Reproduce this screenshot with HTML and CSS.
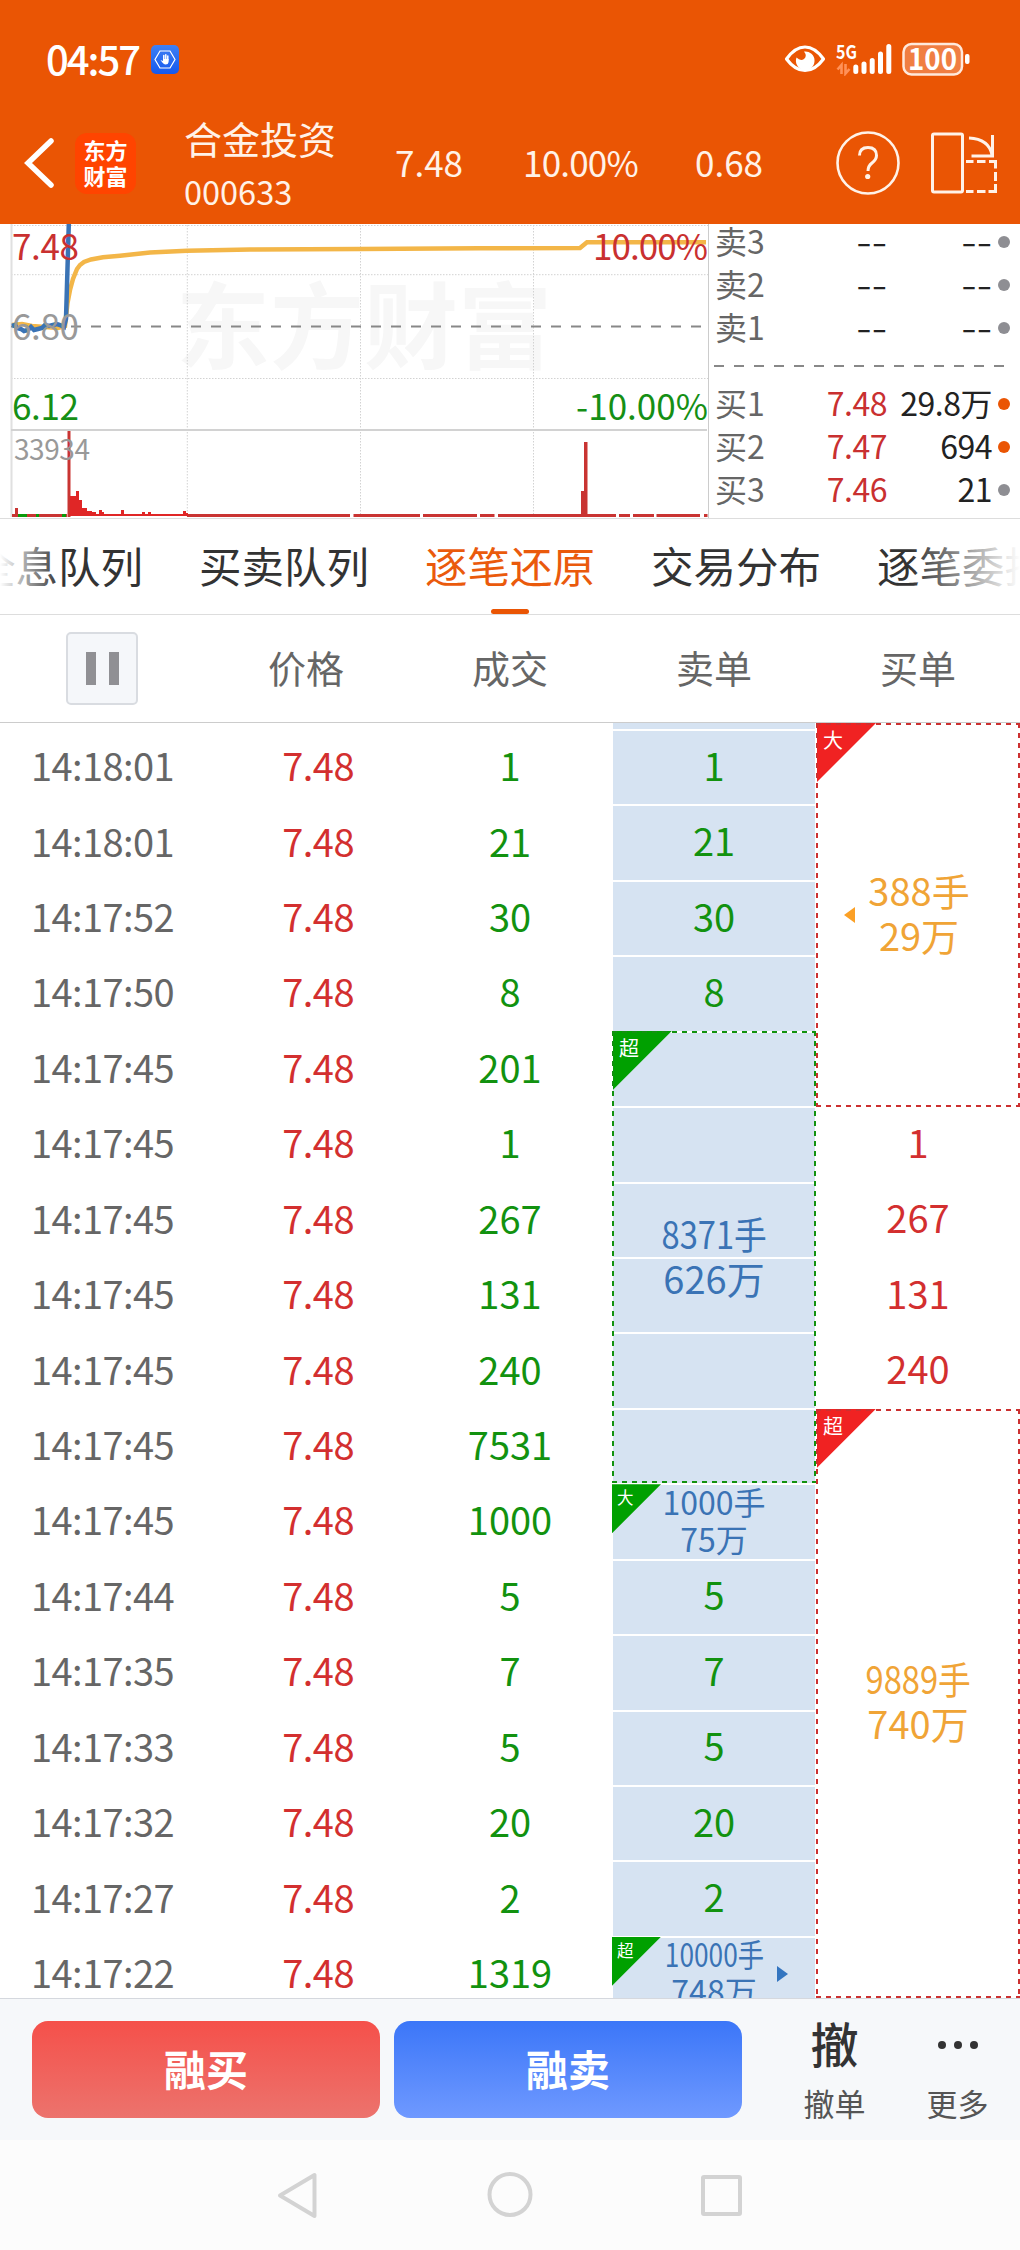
FILE: index.html
```html
<!DOCTYPE html>
<html lang="zh-CN">
<head>
    <meta charset="UTF-8">
    <meta name="viewport" content="width=device-width, initial-scale=1.0">
    <title>合金投资 000633</title>
    <link rel="stylesheet" href="styles.css">
</head>
<body>
    <header class="top">
        <div class="status">
            <span class="clock">04:57</span>
            <svg class="guard" width="28" height="29" viewBox="0 0 28 29">
                <defs>
                    <linearGradient id="guardBg" x1="0" y1="0" x2="0" y2="1">
                        <stop offset="0" stop-color="#4080f4"/>
                        <stop offset="1" stop-color="#1458ee"/>
                    </linearGradient>
                </defs>
                <rect width="28" height="29" rx="5" fill="url(#guardBg)"/>
                <path d="M9 6h10l5 8.500-5 8.500h-10l-5-8.500z" fill="none" stroke="#fff" stroke-width="1.200"/>
                <path d="M12.800 15V10.500M14.800 15V9.800M16.800 15V11" stroke="#fff" stroke-width="1.500" stroke-linecap="round"/>
                <path d="M9.500 15l2.500 1v-2h5.600v3q-.3 2.500-3 2.500-2 0-5.100-4.500z" fill="#fff"/>
            </svg>
            <svg class="signals" width="186" height="34" viewBox="784 42 186 34">
                <path d="M786.500 59Q795 47 805 47T823.500 59Q815 70.500 805 70.500T786.500 59z" fill="none" stroke="#fff" stroke-width="3.200" stroke-linejoin="round"/>
                <path d="M804 51.500a9.300 9.300 0 1 1-7.500 6q4 4 7.500 1.500 3.500-3 0-7.500z" fill="#fff"/>
                <text class="net" x="836" y="59" textLength="21" lengthAdjust="spacingAndGlyphs">5G</text>
                <path d="M841.500 74V65l-4 4.500M845.500 64v9.500l4-4.500" fill="none" stroke="#ff9159" stroke-width="2.600"/>
                <path d="M855.800 67v4.500M864 64v7.500M872.200 60.500v11M880.500 54v17.500M888.800 46.500v25" stroke="#fff" stroke-width="5" stroke-linecap="round"/>
                <rect x="903.500" y="44" width="58.500" height="30.500" rx="8" fill="#f07e42" stroke="#ffe9dc" stroke-width="2.500"/>
                <rect x="965" y="54" width="4.500" height="10" rx="2" fill="#fff"/>
                <text class="charge" x="908" y="69.500" textLength="49" lengthAdjust="spacingAndGlyphs">100</text>
            </svg>
        </div>
        <div class="stock">
            <svg class="back" width="34" height="52" viewBox="0 0 34 52">
                <path d="M31 4L8 26l23 22" fill="none" stroke="#fff" stroke-width="5.500" stroke-linecap="round"/>
            </svg>
            <div class="logo"><span>东方</span><span>财富</span></div>
            <div class="name">
                <div class="title">合金投资</div>
                <div class="code">000633</div>
            </div>
            <span class="figure last">7.48</span>
            <span class="figure percent">10.00%</span>
            <span class="figure change">0.68</span>
            <svg class="tools" width="164" height="66" viewBox="834 130 164 66">
                <g fill="none" stroke="#fff2e8" stroke-width="2.600">
                    <circle cx="868" cy="163" r="30.500"/>
                    <path d="M859.500 155.500q0-8 8.500-8t8.500 8q0 4-4.500 7.500-4 3-4 8" stroke-width="3"/>
                    <rect x="932.500" y="134" width="30" height="58" rx="1.500" stroke-width="3"/>
                    <path d="M969 138q20 1 23 17M992.500 135v21h-21" stroke-width="3"/>
                    <path d="M966 161.500h7.500M977 161.500h8.500M989 161.500h6.500v7M995.500 172v9M995.500 184v7.500h-7M985.500 191.500H977M973.500 191.500H966" stroke-width="3"/>
                </g>
                <circle cx="867.700" cy="176.500" r="2.600" fill="#fff2e8"/>
            </svg>
        </div>
    </header>

    <section class="market">
        <svg class="chart" width="708" height="293" viewBox="0 224 708 293">
            <text class="watermark" x="176" y="362" textLength="376">东方财富</text>
            <g fill="none" stroke="#d2d2d2">
                <path d="M11 225.500H708M11 274.700H708M11 378.500H708M187.300 225V517M360.500 225V517M533.500 225V517" stroke-dasharray="1.500 1.500"/>
                <path d="M11.500 224V517" stroke="#e0e0e0" stroke-width="2"/>
                <path d="M11 430H707" stroke-width="2"/>
            </g>
            <path d="M11 326.500H705" stroke="#888" stroke-width="2" stroke-dasharray="10 10"/>
            <path d="M12 325L22 324 32 326 45 327 58 328 65 326 67.500 303 70 290 73 279 77 269 80 265 84 262 91 259.500 103 257.300 120 255.800 150 252.500 187 250.700 250 249.600 360 248.900 480 248.200 580 248 587 242.200H706" fill="none" stroke="#f3b648" stroke-width="4.500"/>
            <path d="M12 326l3-1 2 3 4 1 3 2 4-1 3-3 3 3 4-1 4-1 3-3 4 1 4-1 4-1 3 1 4 2 2-8L68.800 224" fill="none" stroke="#3a73b5" stroke-width="4.500"/>
            <!-- 成交量 -->
            <g fill="#c93432">
                <rect x="12" y="514" width="55" height="3"/>
                <rect x="15" y="508" width="3" height="9"/>
                <rect x="67.500" y="431" width="3" height="86"/>
                <path d="M187 514h163v3H187zM353.500 514H420v3H353.500zM423 514h54v3H423zM480 514h14.500v3H480zM498 514H616v3H498zM619 514h11v3H619zM633 514h21v3H633zM656.500 514H700v3H656.500zM704 514h3.500v3H704z"/>
                <rect x="581" y="491" width="3.500" height="26"/>
                <rect x="584" y="442" width="3.500" height="75"/>
            </g>
            <path d="M70 496h6v-5h3v9h3v8h5v3h5v1h4v2h3v-4h3v2h2v2h17v-4h3v4h18v-2h3v2h3v-2h3v2h32v-3h3v2h2v3H70z" fill="#e02626"/>
            <path d="M18 514h9v3h-9zM36 514h3v3h-3zM62 514h4v3h-4z" fill="#0a9a0a"/>
            <g class="axis">
                <text x="12" y="260" textLength="67" fill="#c93030">7.48</text>
                <text x="12" y="340" textLength="67" fill="#999">6.80</text>
                <text x="12" y="420" textLength="67" fill="#158f15">6.12</text>
                <text x="593" y="260" textLength="115" fill="#c93030">10.00%</text>
                <text x="576" y="420" textLength="132" fill="#158f15">-10.00%</text>
            </g>
            <text class="volume" x="14" y="460" textLength="76">33934</text>
        </svg>
        <div class="quotes">
            <div class="quote"><span>卖3</span><b class="none">--</b><b class="none">--</b><i></i></div>
            <div class="quote"><span>卖2</span><b class="none">--</b><b class="none">--</b><i></i></div>
            <div class="quote"><span>卖1</span><b class="none">--</b><b class="none">--</b><i></i></div>
            <div class="divider"></div>
            <div class="quote"><span>买1</span><b class="up">7.48</b><b>29.8万</b><i class="hot"></i></div>
            <div class="quote"><span>买2</span><b class="up">7.47</b><b>694</b><i class="hot"></i></div>
            <div class="quote"><span>买3</span><b class="up">7.46</b><b>21</b><i></i></div>
        </div>
    </section>

    <nav class="tabs">
        <span>全息队列</span>
        <span>买卖队列</span>
        <span class="active">逐笔还原</span>
        <span>交易分布</span>
        <span>逐笔委托</span>
    </nav>

    <div class="columns">
        <div><button class="pause"><i></i><i></i></button></div>
        <div>价格</div>
        <div>成交</div>
        <div>卖单</div>
        <div>买单</div>
    </div>

    <main class="ticks">
        <div class="deals">
            <div class="deal"><span>14:18:01</span><span>7.48</span><span>1</span></div>
            <div class="deal"><span>14:18:01</span><span>7.48</span><span>21</span></div>
            <div class="deal"><span>14:17:52</span><span>7.48</span><span>30</span></div>
            <div class="deal"><span>14:17:50</span><span>7.48</span><span>8</span></div>
            <div class="deal"><span>14:17:45</span><span>7.48</span><span>201</span></div>
            <div class="deal"><span>14:17:45</span><span>7.48</span><span>1</span></div>
            <div class="deal"><span>14:17:45</span><span>7.48</span><span>267</span></div>
            <div class="deal"><span>14:17:45</span><span>7.48</span><span>131</span></div>
            <div class="deal"><span>14:17:45</span><span>7.48</span><span>240</span></div>
            <div class="deal"><span>14:17:45</span><span>7.48</span><span>7531</span></div>
            <div class="deal"><span>14:17:45</span><span>7.48</span><span>1000</span></div>
            <div class="deal"><span>14:17:44</span><span>7.48</span><span>5</span></div>
            <div class="deal"><span>14:17:35</span><span>7.48</span><span>7</span></div>
            <div class="deal"><span>14:17:33</span><span>7.48</span><span>5</span></div>
            <div class="deal"><span>14:17:32</span><span>7.48</span><span>20</span></div>
            <div class="deal"><span>14:17:27</span><span>7.48</span><span>2</span></div>
            <div class="deal"><span>14:17:22</span><span>7.48</span><span>1319</span></div>
        </div>
        <div class="orders sell">
            <div class="cell">1</div>
            <div class="cell">21</div>
            <div class="cell">30</div>
            <div class="cell">8</div>
            <div class="cell block frame rows-6">
                <em class="badge">超</em>
                <span class="narrow">8371手</span>
                <span>626万</span>
            </div>
            <div class="cell block small">
                <em class="badge">大</em>
                <span>1000手</span>
                <span>75万</span>
            </div>
            <div class="cell">5</div>
            <div class="cell">7</div>
            <div class="cell">5</div>
            <div class="cell">20</div>
            <div class="cell">2</div>
            <div class="cell block small">
                <em class="badge">超</em>
                <span class="narrow">10000手</span>
                <span>748万</span>
                <i class="arrow"></i>
            </div>
        </div>
        <div class="orders buy">
            <div class="cell block frame first">
                <em class="badge">大</em>
                <span>388手</span>
                <span>29万</span>
                <i class="arrow"></i>
            </div>
            <div class="cell">1</div>
            <div class="cell">267</div>
            <div class="cell">131</div>
            <div class="cell">240</div>
            <div class="cell block frame rest">
                <em class="badge">超</em>
                <span class="narrow">9889手</span>
                <span>740万</span>
            </div>
        </div>
    </main>

    <footer class="actions">
        <button class="trade red">融买</button>
        <button class="trade blue">融卖</button>
        <div class="action">
            <span class="glyph">撤</span>
            <span>撤单</span>
        </div>
        <div class="action">
            <span class="glyph dots"><i></i><i></i><i></i></span>
            <span>更多</span>
        </div>
    </footer>

    <div class="navbar">
        <svg width="1020" height="110" viewBox="0 0 1020 110">
            <g fill="none" stroke="#d3d3d3" stroke-width="4" stroke-linejoin="round">
                <path d="M314.500 35v41L280 55.500z"/>
                <circle cx="510" cy="54.500" r="20.500"/>
                <rect x="703" y="37" width="37" height="37" rx="1"/>
            </g>
        </svg>
    </div>
</body>
</html>
```
FILE: styles.css
```css
* {
    box-sizing: border-box;
}
body {
    margin: 0;
    width: 1020px;
    height: 2250px;
    overflow: hidden;
    background: #fff;
    color: #333;
    font-family: "Noto Sans CJK SC", sans-serif;
    font-size: 38px;
    line-height: 1;
}
button {
    border: none;
    padding: 0;
    font-family: inherit;
}
i, em {
    font-style: normal;
}

/* Header */
.top {
    height: 224px;
    background: #ea5504;
    color: #fff2e8;
}
.status {
    display: flex;
    align-items: center;
    height: 118px;
    padding: 0 50px 0 46px;
}
.clock {
    width: 105px;
    font-size: 40px;
    font-weight: 500;
    letter-spacing: -2px;
    color: #fff;
    padding-bottom: 3px;
}
.signals {
    margin-left: auto;
}
.net {
    font-size: 19px;
    font-weight: 700;
    fill: #fff;
}
.charge {
    font-size: 29px;
    font-weight: 700;
    fill: #fff;
}
.stock {
    display: flex;
    align-items: center;
    height: 106px;
    padding: 0 22px 16px 20px;
}
.logo {
    display: flex;
    flex-direction: column;
    justify-content: center;
    width: 61px;
    height: 61px;
    margin-left: 21px;
    padding-bottom: 3px;
    border-radius: 12px;
    background: #ff4400;
    color: #fff;
    font-size: 22px;
    font-weight: 700;
    line-height: 26px;
    text-align: center;
}
.name {
    width: 211px;
    margin-left: 48px;
    padding-top: 4px;
}
.title {
    line-height: 52px;
}
.code {
    font-size: 32.5px;
    line-height: 54px;
}
.figure {
    font-size: 35px;
    padding-bottom: 3px;
}
.last {
    width: 128px;
}
.percent {
    width: 172px;
    letter-spacing: -0.8px;
}
.tools {
    margin-left: auto;
}

/* Intraday chart and order book */
.market {
    display: flex;
    height: 295px;
    border-bottom: 1px solid #ddd;
}
.chart {
    display: block;
}
.watermark {
    font-size: 94px;
    font-weight: 700;
    fill: #f7f7f7;
}
.axis {
    font-size: 35px;
}
.volume {
    font-size: 28px;
    fill: #999;
}
.quotes {
    flex: 1;
    border-left: 1px solid #ccc;
    padding: 0 11px 0 6px;
    font-size: 32px;
}
.quote {
    display: grid;
    grid-template-columns: 50px 122px 105px 12px;
    align-items: center;
    height: 43px;
    margin-right: -3px;
    line-height: 32px;
}
.quote:first-child {
    margin-top: -4px;
}
.quote span, .quote b {
    padding-bottom: 3px;
    white-space: nowrap;
}
.quote span {
    color: #666;
}
.quote b {
    color: #222;
    font-weight: 400;
    letter-spacing: -0.5px;
    text-align: right;
}
.quote b.up {
    color: #c93030;
}
.quote b.none {
    padding-bottom: 8px;
    font-size: 46px;
    font-weight: 300;
    letter-spacing: 0;
    line-height: 28px;
}
.quote i {
    width: 12px;
    height: 12px;
    margin: 0 0 0 6px;
    border-radius: 50%;
    background: #8e8e93;
}
.quote i.hot {
    background: #ea5504;
}
.divider {
    height: 2px;
    margin: 16px -3px 15px -1px;
    background: repeating-linear-gradient(90deg, #888 0 10px, transparent 10px 20px);
}

/* Tabs */
.tabs {
    position: relative;
    display: flex;
    justify-content: center;
    gap: 56px;
    height: 96px;
    overflow: hidden;
    border-bottom: 1px solid #ddd;
    font-size: 42.5px;
    line-height: 91px;
    white-space: nowrap;
}
.tabs::after {
    content: '';
    position: absolute;
    inset: 0;
    background: linear-gradient(90deg, #fff, rgba(255, 255, 255, 0) 60px, rgba(255, 255, 255, 0) 910px, #fff);
}
.tabs .active {
    display: flex;
    flex-direction: column;
    align-items: center;
    color: #ea5a0c;
}
.tabs .active::after {
    content: '';
    width: 38px;
    height: 6px;
    margin-top: -1px;
    border-radius: 3px;
    background: #ea5504;
}
.columns {
    display: grid;
    grid-template-columns: repeat(5, 204px);
    height: 108px;
    border-bottom: 1px solid #ccc;
    color: #666;
    line-height: 104px;
    text-align: center;
}
.pause {
    display: flex;
    justify-content: center;
    align-items: center;
    gap: 13px;
    width: 72px;
    height: 73px;
    margin: 17px auto 0;
    border: 2px solid #d9dce1;
    border-radius: 5px;
    background: #f5f7fa;
}
.pause i {
    width: 10px;
    height: 33px;
    background: #909094;
}

/* Tick list */
.ticks {
    display: flex;
    height: 1275px;
    overflow: hidden;
}
.deals {
    width: 612px;
    padding-top: 7px;
}
.deal {
    display: grid;
    grid-template-columns: 204px 150px 54px 204px;
    align-items: center;
    height: 75.43px;
    padding-bottom: 5px;
}
.deal span:nth-child(1) {
    padding-left: 31px;
    color: #666;
    letter-spacing: -0.6px;
}
.deal span:nth-child(2) {
    color: #d32f2f;
    text-align: right;
    letter-spacing: -0.5px;
}
.deal span:nth-child(3) {
    grid-column: 4;
    color: #12920f;
    text-align: center;
}
.orders {
    width: 204px;
}
.cell {
    display: flex;
    flex-direction: column;
    justify-content: center;
    align-items: center;
    height: 75.43px;
    padding-bottom: 4px;
}
.sell {
    padding: 6px 0 0;
    color: #12920f;
    background: repeating-linear-gradient(#d6e3f2 0 73.43px, #fff 73.43px 75.43px) 1px 8px / 202px 100% no-repeat,
        linear-gradient(#d6e3f2, #d6e3f2) 1px 0 / 202px 6px no-repeat;
}
.buy {
    color: #d32f2f;
}
.buy .cell {
    padding-bottom: 6px;
}
.block {
    position: relative;
    line-height: 45px;
}
.sell .block {
    --edge: #12920f;
    --flag: #00a000;
    color: #3a73b5;
}
.buy .block {
    --edge: #cc3030;
    --flag: #f02222;
    color: #f0a436;
}
.narrow {
    transform: scaleX(0.86);
}
.rows-6 {
    height: 452.6px;
}
.first {
    height: 384px;
    padding-left: 2px;
}
.rest {
    height: 589.3px;
}
/* 5px dashes, tighter than a native dashed border */
.frame::after {
    content: '';
    position: absolute;
    inset: 0;
    background:
        repeating-linear-gradient(90deg, var(--edge) 0 5px, transparent 5px 10px) top / 100% 2px no-repeat,
        repeating-linear-gradient(90deg, var(--edge) 0 5px, transparent 5px 10px) bottom / 100% 2px no-repeat,
        repeating-linear-gradient(var(--edge) 0 5px, transparent 5px 10px) left / 2px 100% no-repeat,
        repeating-linear-gradient(var(--edge) 0 5px, transparent 5px 10px) right / 2px 100% no-repeat;
}
.badge {
    position: absolute;
    top: 0;
    left: 1px;
    width: 59px;
    height: 59px;
    padding: 0 0 0 6px;
    background: var(--flag);
    clip-path: polygon(0 0, 100% 0, 0 100%);
    color: #fff;
    font-size: 20px;
    line-height: 33px;
}
.small {
    font-size: 32px;
    line-height: 37px;
    padding-bottom: 3px;
}
.small .badge {
    top: 1px;
    left: 0;
    width: 49px;
    height: 49px;
    padding-left: 5px;
    font-size: 16.5px;
    line-height: 26px;
}
.small .narrow {
    transform: scaleX(0.82);
}
.arrow {
    position: absolute;
    top: 184px;
    left: 28px;
    border: solid transparent;
    border-width: 8px 11px 8px 0;
    border-right-color: #fba026;
}
.sell .arrow {
    top: 30px;
    left: 165px;
    border-width: 8px 0 8px 11px;
    border-left-color: #3375c0;
}

/* Trade actions */
.actions {
    display: flex;
    height: 142px;
    padding: 22px 0 0 32px;
    border-top: 1px solid #d5d8de;
    background: #f6f8fa;
}
.trade {
    flex-shrink: 0;
    width: 348px;
    height: 97px;
    margin-right: 14px;
    padding-bottom: 4px;
    border-radius: 16px;
    color: #fff;
    font-size: 42px;
    font-weight: 700;
}
.red {
    background: linear-gradient(#f5504a, #ec736d);
}
.blue {
    background: linear-gradient(#3b76f8, #6f99ff);
}
.action {
    display: flex;
    flex-direction: column;
    align-items: center;
    width: 123px;
    color: #555;
    font-size: 31px;
    line-height: 40px;
}
.trade + .action {
    margin-left: 17px;
}
.glyph {
    height: 62px;
    color: #333;
    font-size: 48px;
    font-weight: 500;
    line-height: 42px;
}
.dots {
    display: flex;
    gap: 8px;
    padding-top: 20px;
}
.dots i {
    width: 8px;
    height: 8px;
    border-radius: 50%;
    background: #333;
}
.navbar {
    height: 110px;
    background: #fcfcfc;
}
```
